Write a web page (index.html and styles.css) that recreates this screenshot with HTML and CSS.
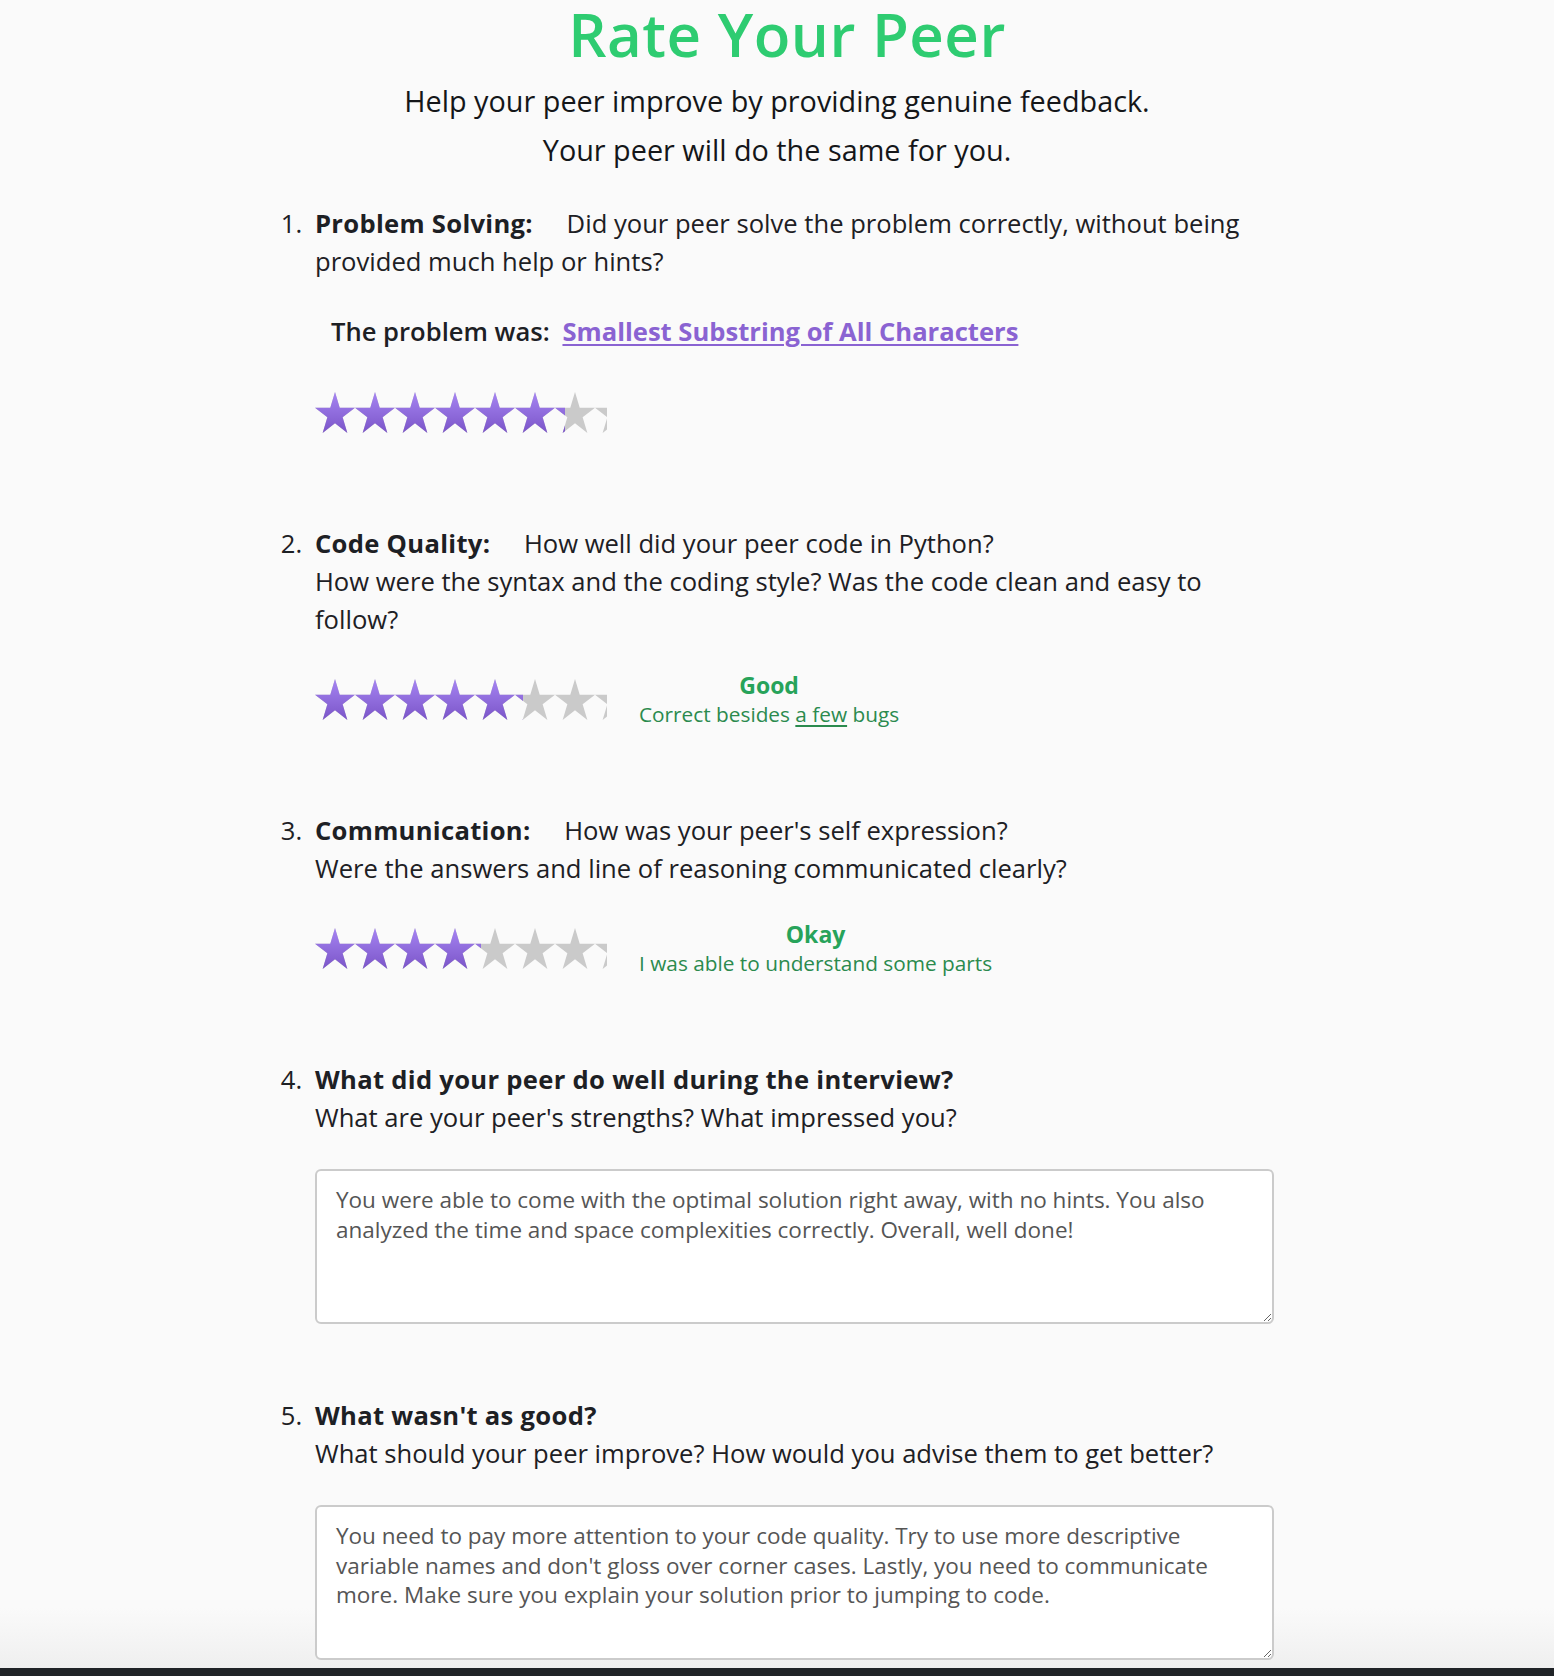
FILE: index.html
```html
<!DOCTYPE html>
<html lang="en">
<head>
<meta charset="utf-8">
<title>Rate Your Peer</title>
<link rel="stylesheet" href="styles.css">
</head>
<body>
<svg class="defs" width="0" height="0" aria-hidden="true">
  <defs>
    <linearGradient id="starGrad" x1="0" y1="0" x2="0" y2="1">
      <stop offset="0" stop-color="#a584f2"/>
      <stop offset="1" stop-color="#7b55c8"/>
    </linearGradient>
    <polygon id="star" points="20,0 24.72,14.53 40,14.53 27.64,23.51 32.36,38.04 20,29.06 7.64,38.04 12.36,23.51 0,14.53 15.28,14.53"/>
    <g id="starRow">
      <use href="#star" x="0"/>
      <use href="#star" x="40"/>
      <use href="#star" x="80"/>
      <use href="#star" x="120"/>
      <use href="#star" x="160"/>
      <use href="#star" x="200"/>
      <use href="#star" x="240"/>
      <use href="#star" x="280"/>
    </g>
  </defs>
</svg>
<div class="page">
  <header class="head">
    <h1 class="title">Rate Your Peer</h1>
    <p class="subtitle">Help your peer improve by providing genuine feedback.<br>Your peer will do the same for you.</p>
  </header>

  <ol class="questions">
    <li class="q">
      <p class="q-text"><strong class="q-name">Problem Solving:</strong> Did your peer solve the problem correctly, without being provided much help or hints?</p>
      <p class="problem"><strong class="problem-label">The problem was:</strong> <a class="problem-link" href="#">Smallest Substring of All Characters</a></p>
      <div class="rating">
        <div class="stars">
          <svg class="stars-base" width="320" height="41" viewBox="0 0 320 38.04" preserveAspectRatio="none"><use href="#starRow" fill="#cacaca"/></svg>
          <div class="stars-fill" style="width:250px"><svg width="320" height="41" viewBox="0 0 320 38.04" preserveAspectRatio="none"><use href="#starRow" fill="url(#starGrad)"/></svg></div>
        </div>
      </div>
    </li>

    <li class="q">
      <p class="q-text"><strong class="q-name">Code Quality:</strong> How well did your peer code in Python?<br>How were the syntax and the coding style? Was the code clean and easy to follow?</p>
      <div class="rating">
        <div class="stars">
          <svg class="stars-base" width="320" height="41" viewBox="0 0 320 38.04" preserveAspectRatio="none"><use href="#starRow" fill="#cacaca"/></svg>
          <div class="stars-fill" style="width:208px"><svg width="320" height="41" viewBox="0 0 320 38.04" preserveAspectRatio="none"><use href="#starRow" fill="url(#starGrad)"/></svg></div>
        </div>
        <div class="rating-label">
          <div class="label-title">Good</div>
          <div class="label-desc">Correct besides <u>a few</u> bugs</div>
        </div>
      </div>
    </li>

    <li class="q">
      <p class="q-text"><strong class="q-name">Communication:</strong> How was your peer's self expression?<br>Were the answers and line of reasoning communicated clearly?</p>
      <div class="rating">
        <div class="stars">
          <svg class="stars-base" width="320" height="41" viewBox="0 0 320 38.04" preserveAspectRatio="none"><use href="#starRow" fill="#cacaca"/></svg>
          <div class="stars-fill" style="width:166px"><svg width="320" height="41" viewBox="0 0 320 38.04" preserveAspectRatio="none"><use href="#starRow" fill="url(#starGrad)"/></svg></div>
        </div>
        <div class="rating-label">
          <div class="label-title">Okay</div>
          <div class="label-desc">I was able to understand some parts</div>
        </div>
      </div>
    </li>

    <li class="q q-open">
      <p class="q-text"><strong class="q-title">What did your peer do well during the interview?</strong><br>What are your peer's strengths? What impressed you?</p>
      <textarea class="answer">You were able to come with the optimal solution right away, with no hints. You also analyzed the time and space complexities correctly. Overall, well done!</textarea>
    </li>

    <li class="q q-open">
      <p class="q-text"><strong class="q-title">What wasn't as good?</strong><br>What should your peer improve? How would you advise them to get better?</p>
      <textarea class="answer">You need to pay more attention to your code quality. Try to use more descriptive variable names and don't gloss over corner cases. Lastly, you need to communicate more. Make sure you explain your solution prior to jumping to code.</textarea>
    </li>
  </ol>
</div>
</body>
</html>
```

FILE: styles.css
```css
html, body {
  margin: 0;
  padding: 0;
}

body {
  background: #202327;
  font-family: "Open Sans", "Liberation Sans", sans-serif;
  color: #1d2024;
}

.defs {
  position: absolute;
  width: 0;
  height: 0;
  overflow: hidden;
}

.page {
  background: linear-gradient(to bottom, #fafafa calc(100% - 60px), #efefef);
  padding-bottom: 8px;
  overflow: hidden;
}

.head {
  text-align: center;
}

.title {
  margin: 0;
  padding-left: 20px;
  font-size: 60px;
  line-height: 68px;
  font-weight: 600;
  color: #2ecc71;
  letter-spacing: 0.5px;
}

.subtitle {
  margin: 8px 0 0;
  font-size: 28.8px;
  line-height: 49px;
  color: #141619;
}

.questions {
  width: 1000px;
  box-sizing: border-box;
  margin: 29px auto 0;
  padding: 0 0 0 38px;
  font-size: 25.6px;
  line-height: 38px;
}

.q::marker {
  content: counter(list-item) ".\2002";
}

.q {
  margin: 0 0 90px;
}

.q.q-open {
  margin-bottom: 71px;
}

.q:last-child {
  margin-bottom: 0;
}

.q-text {
  margin: 0;
  padding-top: 2px;
  width: 962px;
}

.q-name {
  font-weight: 700;
  letter-spacing: 0.3px;
  margin-right: 27px;
}

.q-title {
  font-weight: 700;
  letter-spacing: 0.3px;
}

.problem {
  margin: 32px 0 0 16px;
}

.problem-label {
  font-weight: 600;
  margin-right: 6px;
}

.problem-link {
  color: #8a63d2;
  font-weight: 700;
  text-decoration: underline;
  text-decoration-thickness: 2px;
  text-underline-offset: 3px;
}

.rating {
  display: flex;
  align-items: center;
  gap: 32px;
  height: 41px;
  margin-top: 40px;
}

.problem + .rating {
  margin-top: 41px;
}

.stars {
  position: relative;
  width: 292px;
  height: 41px;
  overflow: hidden;
  flex: none;
}

.stars svg {
  display: block;
}

.stars-fill {
  position: absolute;
  left: 0;
  top: 0;
  height: 41px;
  overflow: hidden;
}

.rating-label {
  text-align: center;
  font-size: 20.8px;
  line-height: 29px;
}

.label-title {
  font-size: 23px;
  font-weight: 700;
  color: #27a35a;
}

.label-desc {
  color: #2b8a4e;
}

.label-desc u {
  text-underline-offset: 3px;
}

.answer {
  display: block;
  box-sizing: border-box;
  width: 959px;
  height: 155px;
  margin-top: 32px;
  padding: 14px 19px;
  border: 2px solid #cbcbcb;
  border-radius: 6px;
  background: #fff;
  font-family: "Open Sans", "Liberation Sans", sans-serif;
  font-size: 22.5px;
  line-height: 29.5px;
  color: #555;
}
```
